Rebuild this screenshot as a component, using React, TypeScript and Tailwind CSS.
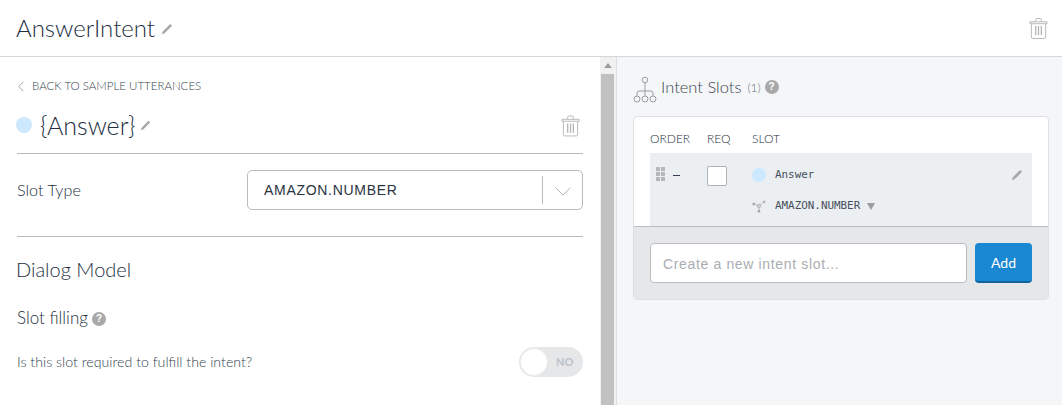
const EMBER = "font-['Lato',sans-serif]";

function PencilIcon({ className }: { className?: string }) {
  return (
    <svg viewBox="0 0 12 12" className={className} fill="#a8a8a8">
      <path d="M9.2 .9 11.1 2.8 3.6 10.3 .8 11.2 1.7 8.4Z" />
    </svg>
  );
}

function TrashIcon({ className }: { className?: string }) {
  return (
    <svg viewBox="0 0 20 24" className={className} fill="none" stroke="#b4b6b8" strokeWidth="1">
      <path d="M1 5.5h18v2H1zM7 5.5V3.2q0-1.2 1.2-1.2h3.6q1.2 0 1.2 1.2v2.3M2.5 7.5v14q0 1.5 1.5 1.5h12q1.5 0 1.5-1.5v-14" />
      <path d="M7 10v9.5M10 10v9.5M13 10v9.5" strokeWidth="1.4" />
    </svg>
  );
}

function HelpDot({ className }: { className?: string }) {
  return (
    <span
      className={`inline-flex items-center justify-center rounded-full bg-[#a9a9a9] text-white font-bold text-[10px] leading-none font-['Liberation_Sans',sans-serif] w-[14px] h-[14px] ${className ?? ""}`}
    >
      ?
    </span>
  );
}

function SlotTree() {
  return (
    <svg viewBox="0 0 24 28" className="w-[24px] h-[28px] mt-[6px]" fill="none" stroke="#9a9da0" strokeWidth="1">
      <circle cx="12" cy="4" r="2.8" />
      <path d="M12 7v8M4 20v-3q0-2 2-2h12q2 0 2 2v3M12 15v5" />
      <circle cx="4" cy="23" r="3" />
      <circle cx="12" cy="23" r="3" />
      <circle cx="20" cy="23" r="3" />
    </svg>
  );
}

function TypeIcon() {
  return (
    <svg viewBox="0 0 14 14" className="w-[14px] h-[14px]" fill="#a0a3a6" stroke="#a0a3a6" strokeWidth="0.6">
      <path d="M7 7 2 5M7 7l5-4M7 7v5" />
      <circle cx="7" cy="7" r="1.8" fill="none" />
      <circle cx="1.8" cy="5" r="1.1" />
      <circle cx="12.2" cy="2.8" r="0.9" />
      <circle cx="7" cy="12.2" r="1.1" />
    </svg>
  );
}

export default function App() {
  return (
    <div className={`w-[1062px] h-[405px] overflow-hidden bg-white flex flex-col text-[#232f3e] ${EMBER}`}>
      <header className="h-[57px] shrink-0 border-b border-[#d5d7d9] flex items-center pl-4 pr-[14px]">
        <h1 className="text-[24px] font-light leading-none mt-[-1px]">AnswerIntent</h1>
        <PencilIcon className="w-[12px] h-[12px] ml-[6px] mt-[1px]" />
        <TrashIcon className="w-[19px] h-[24px] ml-auto mt-[-1px]" />
      </header>

      <div className="flex-1 flex min-h-0">
        <main className="w-[600px] shrink-0 pl-[17px] pr-[17px] overflow-hidden">
          <a className="flex items-center h-[16px] mt-[21px] text-[11.5px] font-light text-[#333f4e]">
            <svg viewBox="0 0 8 12" className="w-[8px] h-[11px] mr-[7px]" fill="none" stroke="#9a9da0">
              <path d="M6.5 1 1.5 6l5 5" />
            </svg>
            BACK TO SAMPLE UTTERANCES
          </a>

          <div className="flex items-center h-[34px] mt-[14px] -ml-px">
            <span className="w-[16px] h-[16px] rounded-full bg-[#cce8ff]" />
            <span className="text-[25px] font-light ml-[8px] leading-none">{"{Answer}"}</span>
            <PencilIcon className="w-[11px] h-[11px] ml-[5px]" />
            <TrashIcon className="w-[19px] h-[23px] ml-auto mr-[3px]" />
          </div>

          <div className="mt-[11px] border-t border-[#b9bcbf]" />

          <div className="flex items-center justify-between mt-[16px] h-[40px]">
            <span className="text-[16.2px] font-light mt-px">Slot Type</span>
            <div className="w-[336px] h-full rounded-[5px] border border-[#b9bcc1] flex items-center pl-4">
              <span className="text-[14px] tracking-[0.7px] text-[#2a3441] font-['Liberation_Sans',sans-serif]">AMAZON.NUMBER</span>
              <span className="ml-auto w-px h-[28px] bg-[#b9bcc1]" />
              <svg viewBox="0 0 16 9" className="w-[16px] h-[9px] ml-[12px] mr-[11px] mt-[2px]" fill="none" stroke="#b4b6b8">
                <path d="M.5 .5 8 8l7.5-7.5" />
              </svg>
            </div>
          </div>

          <div className="mt-[26px] border-t border-[#b9bcbf]" />

          <h2 className="text-[20px] font-light leading-none mt-[22px] -ml-px">Dialog Model</h2>

          <div className="flex items-center mt-[29px] h-[20px]">
            <span className="text-[17px] font-light">Slot filling</span>
            <HelpDot className="ml-[4px] mt-[1px]" />
          </div>

          <div className="flex items-center justify-between mt-[19px] h-[30px]">
            <span className="text-[14.2px] font-light text-[#333f4e]">Is this slot required to fulfill the intent?</span>
            <div className="w-[64px] h-[30px] rounded-full bg-[#e6e7e9] flex items-center p-[1px]">
              <span className="w-[28px] h-[28px] rounded-full bg-white border border-[#ececec]" />
              <span className="ml-[8px] text-[11px] font-bold text-[#bcc2cc]">NO</span>
            </div>
          </div>
        </main>

        <div className="w-[16px] shrink-0 bg-[#f1f1f1] flex flex-col items-center pl-px pr-[2px]">
          <svg viewBox="0 0 8 5" className="w-[8px] h-[5px] mt-[6px] mb-[6px]" fill="#9d9d9d">
            <path d="M4 0 8 5H0Z" />
          </svg>
          <div className="w-full flex-1 bg-[#c1c1c1]" />
        </div>

        <aside className="flex-1 min-w-0 border-l border-[#dcdee0] bg-[#f5f6f8] pl-4 pr-[13px]">
          <div className="flex items-center h-[30px] mt-[15px]">
            <SlotTree />
            <span className="text-[16.5px] font-light text-[#3a4552] ml-[4px]">Intent Slots</span>
            <span className="text-[12px] font-light text-[#6b7480] ml-[6px] mt-[1px]">(1)</span>
            <HelpDot className="ml-[4px]" />
          </div>

          <section className="mt-[14px] h-[184px] rounded-[4px] border border-[#dddfe2] bg-white flex flex-col overflow-hidden">
            <div className="flex-1 min-h-0 px-4">
              <div className="h-[36px] flex items-center pt-[8px] text-[12px] text-[#232f3e]">
                <span className="w-[57px] font-light">ORDER</span>
                <span className="w-[45px] font-light">REQ</span>
                <span className="font-light">SLOT</span>
              </div>
              <div className="h-[73px] bg-[#eceff2] flex font-['DejaVu_Sans_Mono',monospace] text-[10.9px] text-[#444f5c]">
                <div className="w-[57px] flex items-start pt-[14px] pl-[6px]">
                  <span className="grid grid-cols-2 gap-px w-[9px]">
                    {[0, 1, 2, 3, 4, 5].map((i) => (
                      <span key={i} className="w-[4px] h-[4px] bg-[#b5b8ba]" />
                    ))}
                  </span>
                  <span className="w-[7px] h-px bg-[#333f4e] ml-[8px] mt-[8px]" />
                </div>
                <div className="w-[45px] pt-[13px]">
                  <div className="w-[20px] h-[20px] bg-white rounded-[2px] border border-[#aeb2b6]" />
                </div>
                <div className="flex-1 flex flex-col pr-[9px]">
                  <div className="flex items-center h-[14px] mt-[15px]">
                    <span className="w-[14px] h-[14px] rounded-full bg-[#cce8ff]" />
                    <span className="ml-[9px]">Answer</span>
                    <PencilIcon className="w-[12px] h-[12px] ml-auto" />
                  </div>
                  <div className="flex items-center h-[14px] mt-[17px]">
                    <TypeIcon />
                    <span className="ml-[9px]">AMAZON.NUMBER</span>
                    <svg viewBox="0 0 8 7" className="w-[8px] h-[7px] ml-[7px]" fill="#9a9da0">
                      <path d="M0 0h8L4 7Z" />
                    </svg>
                  </div>
                </div>
              </div>
            </div>
            <div className="h-[73px] shrink-0 bg-[#e6e7e9] border-t border-[#b9bcc1] px-4 flex items-center gap-2 font-['Liberation_Sans',sans-serif]">
              <input
                readOnly
                placeholder="Create a new intent slot..."
                className="flex-1 min-w-0 h-[40px] rounded-[4px] bg-white border border-[#b9bcc1] px-3 pt-px text-[14px] tracking-[0.65px] placeholder:text-[#a9adb2]"
              />
              <button className={`w-[57px] h-[40px] rounded-[4px] bg-[#1a87d2] border-b-2 border-[#0f659f] text-white text-[14px] ${EMBER}`}>
                Add
              </button>
            </div>
          </section>
        </aside>
      </div>
    </div>
  );
}
